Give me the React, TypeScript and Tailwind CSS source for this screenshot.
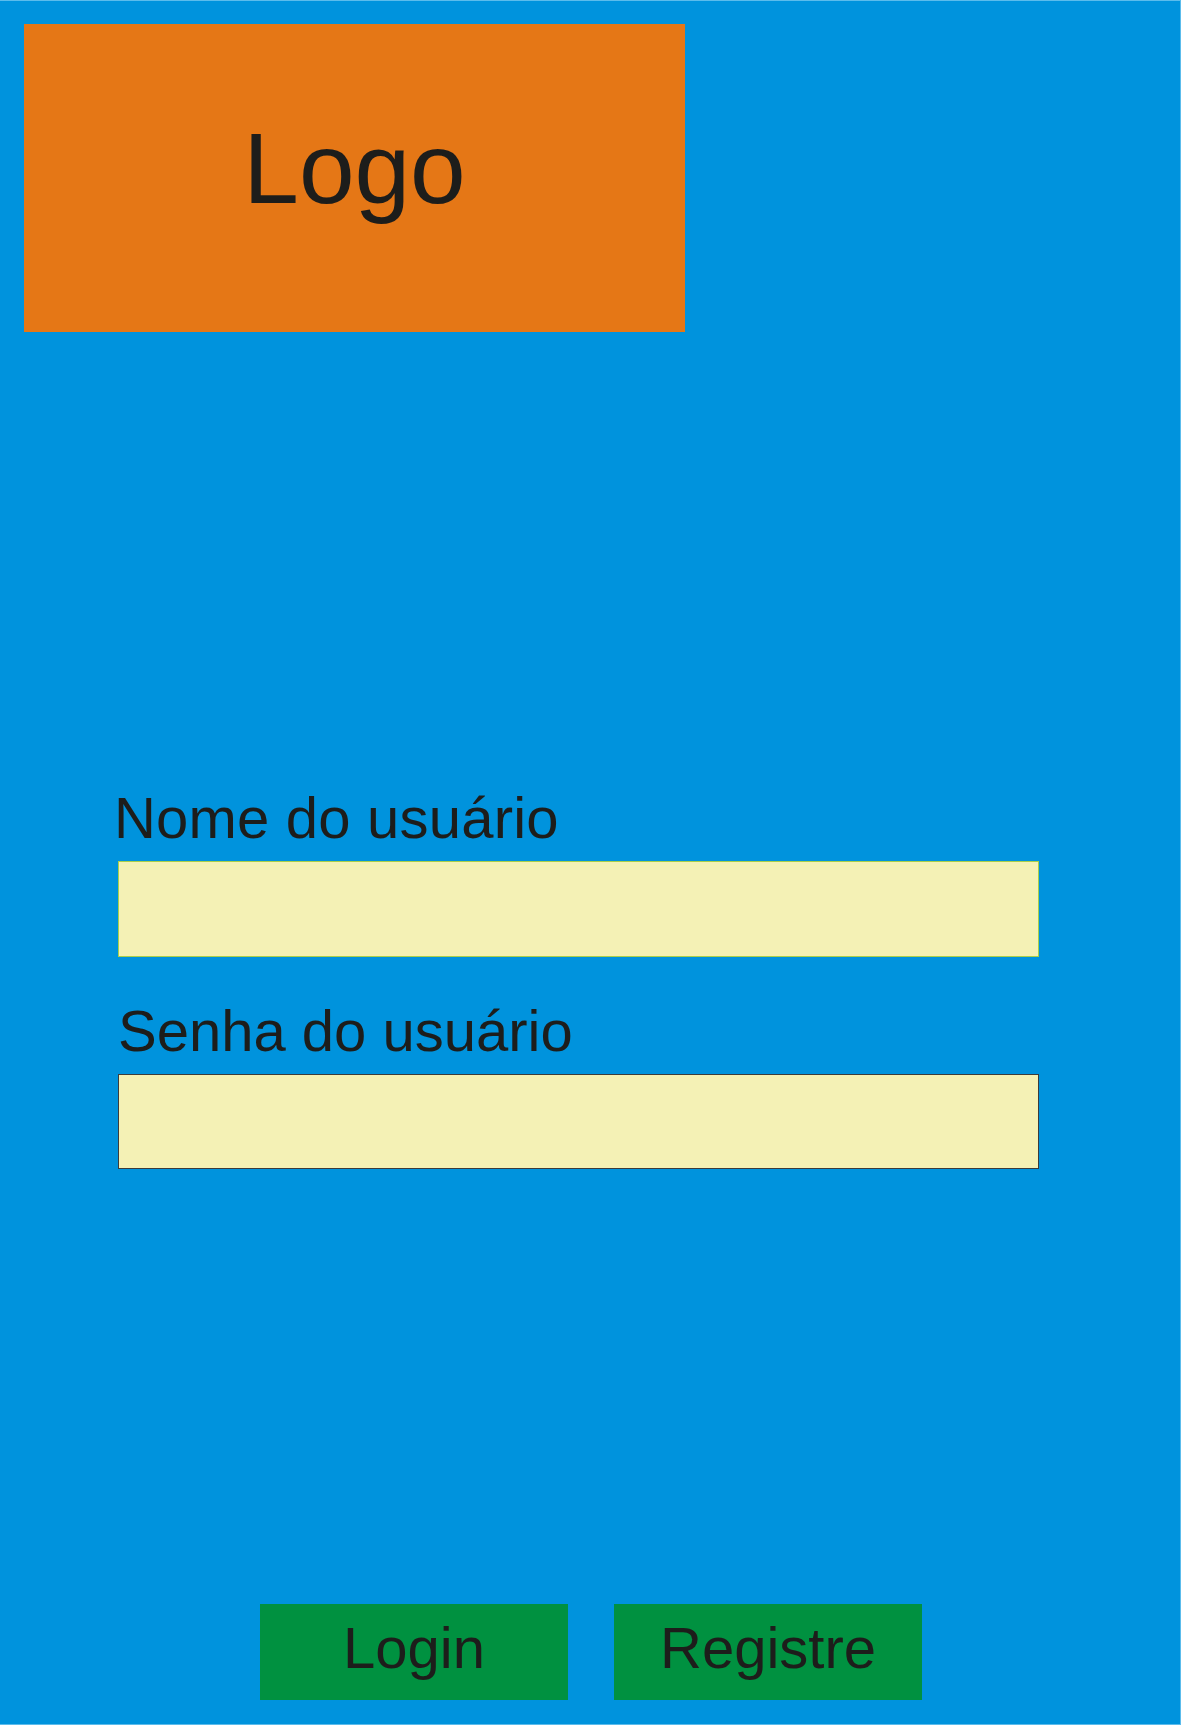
export default function App() {
  return (
    <div
      className="w-[1181px] h-[1725px] bg-[#0093dd] border-t border-r border-b border-[#5cbcec] flex flex-col text-[#1d1d1b]"
      style={{ fontFamily: '"Liberation Sans", Arial, sans-serif' }}
    >
      {/* Logo */}
      <div className="mt-[23px] ml-[24px] w-[661px] h-[308px] bg-[#e57716] flex items-center justify-center pb-[20px]">
        <span className="text-[100px] leading-none">Logo</span>
      </div>

      {/* Form */}
      <div className="mt-[457px] flex flex-col">
        <label className="ml-[114px] text-[58px] leading-none tracking-[0.2px]">Nome do usuário</label>
        <input
          type="text"
          className="mt-[14px] ml-[118px] w-[921px] h-[96px] bg-[#f4f1b5] border border-[#a9cf4a] outline-none"
        />
        <label className="mt-[45px] ml-[118px] text-[58px] leading-none">Senha do usuário</label>
        <input
          type="password"
          className="mt-[14px] ml-[118px] w-[921px] h-[95px] bg-[#f4f1b5] border border-[#3c3c3b] outline-none"
        />
      </div>

      {/* Actions */}
      <div className="mt-[435px] ml-[260px] flex gap-[46px]">
        <button className="w-[308px] h-[96px] bg-[#009140] flex items-center justify-center pb-[8px] text-[58px] leading-none">
          Login
        </button>
        <button className="w-[308px] h-[96px] bg-[#009140] flex items-center justify-center pb-[8px] text-[58px] leading-none">
          Registre
        </button>
      </div>
    </div>
  );
}
